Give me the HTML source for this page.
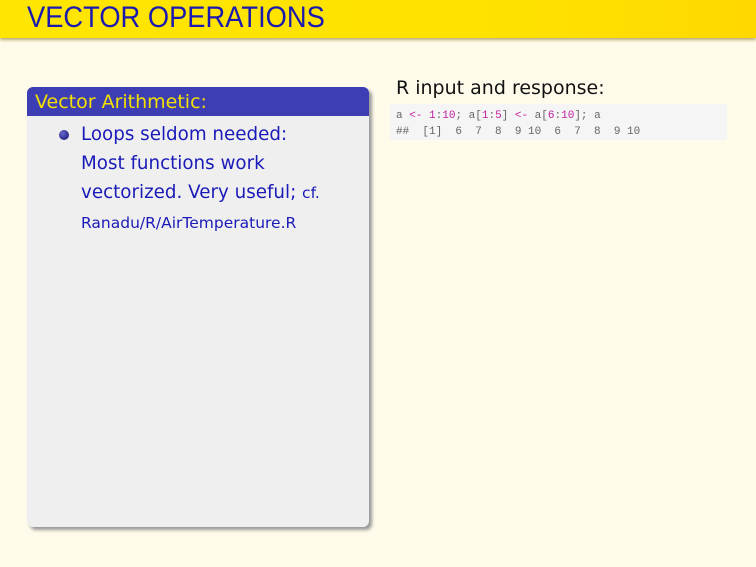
<!DOCTYPE html>
<html><head><style>
body{margin:0;width:756px;height:567px;background:#fffbea;position:relative;overflow:hidden;font-family:"DejaVu Sans","Liberation Sans",sans-serif}
.hdr{position:absolute;left:0;top:0;width:756px;height:38px;background:linear-gradient(90deg,#ffe600,#ffe100 70%,#ffd800);box-shadow:0 2px 3px #b8a870}
.hdr span{position:absolute;left:27px;top:1px;font-family:"Liberation Sans",sans-serif;font-size:30px;color:#1a1ab0;transform:scaleX(0.91);transform-origin:0 0;white-space:nowrap}
.box{position:absolute;left:27px;top:87px;width:342px;height:440px;border-radius:6px;background:#efefef;box-shadow:3px 3px 3px #999;overflow:hidden}
.bt{height:29px;background:#3e3eb4;color:#f2e000;font-size:19px;line-height:30px;padding-left:8px}
.bul{position:absolute;left:32px;top:43px;width:10px;height:10px;border-radius:50%;background:radial-gradient(circle at 35% 35%,#6666cc,#10106a)}
.txt{position:absolute;left:54px;top:33px;color:#1a1ab8;font-size:18.3px;line-height:29px}
.sm{font-size:15.5px}
.rt{position:absolute;left:396px;top:77px;font-size:19px;color:#111}
.code{position:absolute;left:390px;top:104px;width:337px;height:36px;background:#f5f5f5;font-family:"Liberation Mono",monospace;font-size:11px;color:#666;line-height:16px;padding:4px 0 0 6px;box-sizing:border-box;white-space:pre}
.m{color:#c020a0}
</style></head><body>
<div class="hdr"><span>VECTOR OPERATIONS</span></div>
<div class="box"><div class="bt">Vector Arithmetic:</div>
<div class="bul"></div>
<div class="txt">Loops seldom needed:<br>Most functions work<br>vectorized. Very useful; <span class="sm">cf.</span><br><span class="sm">Ranadu/R/AirTemperature.R</span></div>
</div>
<div class="rt">R input and response:</div>
<div class="code">a <span class="m">&lt;-</span> <span class="m">1</span>:<span class="m">10</span>; a[<span class="m">1</span>:<span class="m">5</span>] <span class="m">&lt;-</span> a[<span class="m">6</span>:<span class="m">10</span>]; a
##  [1]  6  7  8  9 10  6  7  8  9 10</div>
</body></html>
